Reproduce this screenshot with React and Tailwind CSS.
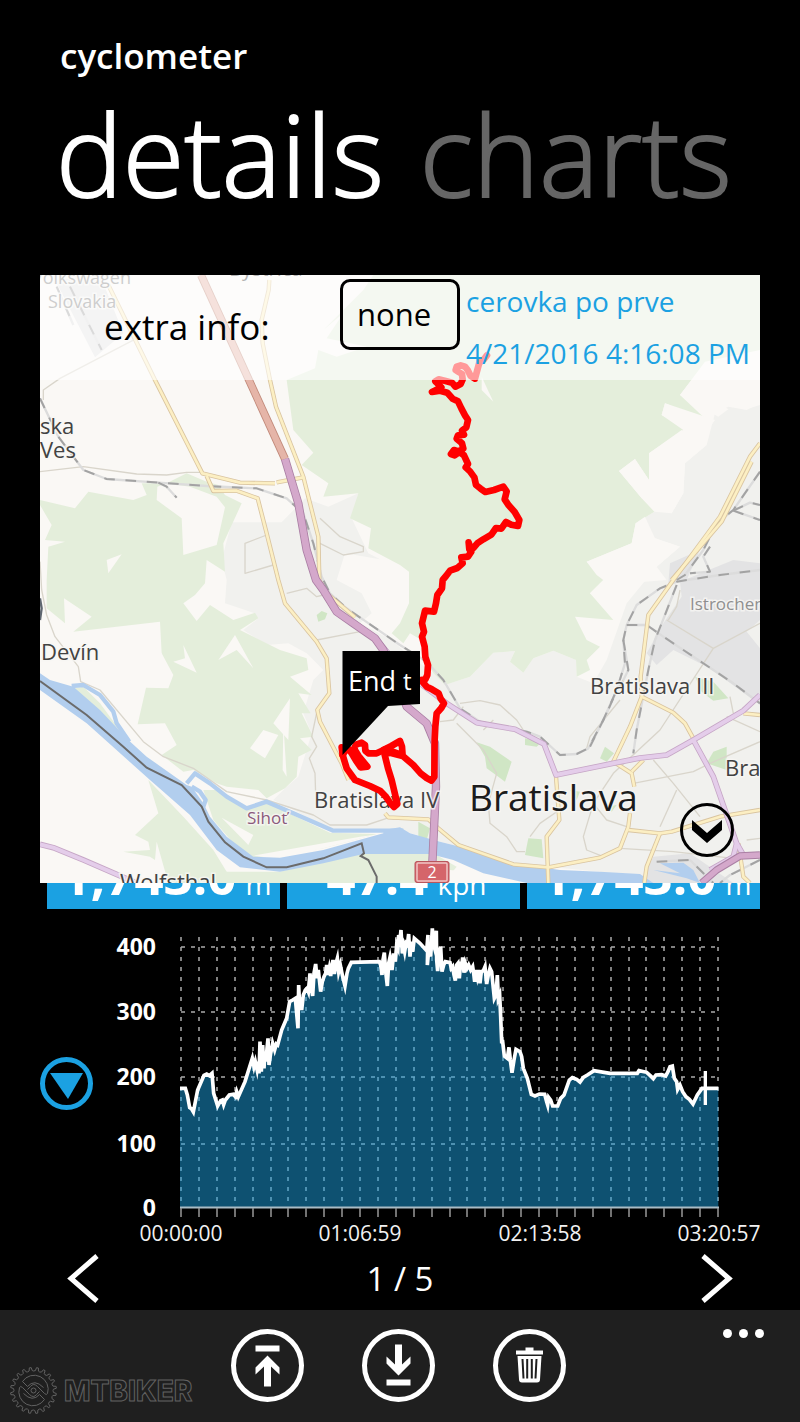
import React from "react";

const FONT = "font-['Open_Sans','Noto_Sans',sans-serif]";

/* Map geometry is drawn on a grid three times finer than the map's own units. */
const GREENS = [
  "740,330 825,295 835,240 890,260 980,230 910,215 860,205 910,130 850,180 970,60 1000,15 2160,15 2160,240 1995,275 1920,375 2000,450 1875,400 1865,435 1930,480 1827,550 1827,630 1785,567 1737,603 1810,690 1843,725 1787,760 1775,820 1640,875 1670,915 1690,930 1650,970 1720,1050 1605,1040 1640,1110 1680,1130 1640,1170 1650,1200 1610,1220 1608,1170 1540,1142 1480,1165 1450,1208 1410,1175 1425,1143 1360,1148 1290,1220 1215,1245 1180,1210 1160,1180 1160,1120 1110,1090 1090,1120 1055,1090 1080,1060 1107,1000 1107,905 1080,885 985,835 993,775 930,745 955,670 850,680 865,640 785,585 820,548 760,480",
  "0,690 105,715 145,665 280,690 320,675 305,640 380,640 440,610 500,635 535,645 555,675 605,700 550,820 555,905 500,870 495,940 465,975 430,1000 470,1053 510,1005 580,1050 645,1028 655,1045 600,1080 720,1140 800,1165 805,1200 750,1220 815,1275 775,1270 812,1330 785,1330 820,1400 780,1405 815,1440 775,1460 770,1520 735,1555 680,1585 655,1560 560,1550 530,1540 460,1500 430,1505 365,1455 410,1425 375,1360 293,1363 318,1253 385,1255 400,1215 365,1150 360,1055 100,1085 155,1040 72,985 75,1060 20,1015 20,930 25,830 75,815 15,810 35,765 0,705",
  "285,1695 355,1630 325,1530 430,1640 520,1740 560,1805 620,1839 385,1839 350,1715 345,1770 330,1760 250,1745 330,1740 325,1715",
  "550,1805 720,1805 960,1745 1080,1750 1180,1750 1250,1790 1210,1839 560,1839",
  "490,1560 540,1560 620,1618 680,1598 870,1688 1010,1692 850,1735 640,1762 580,1720 520,1650",
  "100,1255 130,1250 180,1300 250,1395 180,1330",
];
const CLEARINGS = [
  "350,690 425,745 430,855 530,825 555,712 530,680 450,650 380,640 352,650",
  "200,870 245,853 205,910", "585,1095 640,1195 590,1140 535,1170", "430,1125 470,1208 400,1175 435,1165",
  "750,1285 745,1410 700,1360", "670,1380 715,1395 675,1465 630,1435", "545,1643 640,1695 625,1725",
  "1325,320 1360,395 1325,360", "640,1757 960,1700 1000,1695 850,1735 720,1760", "1230,1800 1330,1810 1390,1839 1220,1839",
  "322,1110 318,1150 370,1215 365,1150", "730,1360 740,1520 728,1500",
];
const URBAN = [
  "575,757 725,757 795,685 865,710 955,670 935,745 985,850 1020,868 915,850 890,930 965,970 995,1030 960,1060 1055,1110 1100,1150 1180,1210 1215,1245 1290,1220 1360,1148 1425,1143 1410,1175 1450,1208 1480,1165 1540,1142 1608,1170 1610,1220 1660,1240 1700,1170 1760,1000 1850,890 1920,830 1845,805 1787,760 1843,725 1895,730 1930,670 1935,580 2000,525 2025,430 2065,410 2120,420 2160,400 2160,1839 1840,1839 1680,1805 1420,1780 1260,1730 1180,1710 1080,1680 960,1688 870,1675 760,1620 700,1590 735,1555 775,1520 800,1440 815,1390 790,1330 820,1230 850,1200 800,1150 745,1120 680,1125 610,1080 655,1045 640,1028 555,1000 560,930 545,870",
];
const SHARDS = ["2055,300 2160,255 2160,405 2118,418", "1920,375 1955,330 2065,418 2035,440", "1875,400 2025,450 1990,500 1865,435", "1827,550 1925,480 2000,525 1935,580 1930,670 1895,730 1805,685 1737,603 1785,567 1827,630", "1640,875 1775,820 1787,760 1815,740 1845,805 1920,830 1850,890 1880,930 1760,940 1700,1000 1650,970 1690,930"];
const INDUSTRY = [
  "45,30 180,15 250,190 165,262", "1920,935 2080,870 2160,880 2160,1050 2120,1085 2160,1135 2160,1305 2010,1195 1900,1140 1850,1185 1820,1150 1870,1060 1925,980",
  "1890,880 1980,840 1940,930 1885,940", "1840,1760 1950,1750 2080,1839 1800,1839",
];
const PARKS = [
  "830,1035 845,1023 862,1030 855,1048 835,1055", "1310,1417 1350,1430 1415,1475 1395,1535 1375,1520 1340,1495 1335,1460",
  "1465,1705 1505,1708 1510,1765 1455,1755", "1695,1430 1722,1450 1700,1475 1680,1465", "1965,1220 2020,1235 2065,1285 2020,1292 1985,1265",
  "2060,1430 2060,1500 2000,1480 2020,1445", "1135,1655 1170,1675 1160,1710 1135,1700", "1455,1405 1505,1415 1490,1430 1455,1425", "1590,1560 1620,1565 1610,1590", "1700,1610 1730,1605 1715,1625",
];
const HIGHWAY = "735,567 775,700 800,840 828,930 850,960 890,1025 940,1060 1005,1105 1030,1140 1045,1190 1075,1240 1100,1310 1160,1360 1185,1420 1188,1550 1177,1780";
const ARTERIES = [
  "940,1055 1010,1110 1080,1190 1140,1240 1220,1300 1310,1358 1425,1378 1512,1422 1548,1515 1720,1480 1800,1464 1880,1455 1960,1410 2110,1322 2160,1275",
  "1960,1410 2020,1520 2090,1720 2110,1755", "0,1723 40,1733 130,1770 230,1813 290,1839", "2090,1720 2080,1760 2010,1800",
];
const MAUVE = ["2160,1755 2100,1758 2030,1800 1985,1839"];
const YELLOW = [
  "205,45 345,330 487,610 600,638 705,640", "710,637 790,622", "500,618 520,663 590,662 653,685 680,790 715,930 735,1000 830,1115 860,1165 868,1270 832,1320 840,1355 905,1480 925,1530",
  "688,30 686,60 665,150 668,220 690,330 708,410 790,620 835,800 838,930 860,970 945,1042",
  "1035,1630 1045,1642 1165,1648 1195,1675 1255,1725 1420,1783 1525,1792 1680,1763 1740,1735 1765,1670 1770,1630",
  "2160,520 2130,560 2040,740 1900,930 1825,1035 1802,1220 1805,1280 1770,1370 1720,1475 1775,1510 1783,1550",
  "2135,575 2045,755 1895,930", "1805,1280 1900,1328 1935,1360 1960,1405", "1775,1505 1810,1470",
  "1548,1520 1558,1650 1520,1700 1525,1839", "1765,1680 1860,1690 1895,1685 2040,1640 2160,1620", "1860,1690 1820,1790 1813,1839",
  "2095,1720 2110,1820 2130,1839", "2110,1330 2160,1335",
];
const RAILS = [
  "0,385 55,500 130,600 200,627 355,638 500,648 650,655 740,685 790,730 820,820 845,920 870,970 920,1015 1000,1070 1080,1125 1160,1175 1210,1230 1260,1315 1320,1355 1460,1385 1500,1400 1560,1455 1610,1452 1645,1435 1690,1350 1730,1260 1755,1180 1750,1110 1760,1065 1790,1005 1860,955 1910,935 2040,915 2160,900",
  "1910,945 1865,1060 1845,1110 1825,1200 1790,1380 1780,1450", "1760,1065 1820,1065 1870,1100 1930,1140 2020,1200 2080,1240 2160,1300",
  "2160,605 2080,720 2030,760 1990,840 1935,915 1910,930", "2080,722 2130,698 2160,705", "2080,722 2160,750", "2010,830 1990,860 2010,905 1950,910", "355,638 380,650 410,683",
  "90,50 185,240", "50,50 100,165", "1650,1430 1700,1330 1735,1250", "1850,1775 1950,1770 2020,1839", "2160,1770 2070,1815 2040,1839", "1750,1110 1765,1200 1740,1250",
];
const LANES = [
  "0,605 130,590 290,612 380,615 440,607 487,607", "10,390 10,360 60,325 290,205", "0,875 5,960 20,1035 45,1100 115,1190 122,1235 180,1260 310,1415 370,1460 460,1495 560,1565 680,1590 820,1635 870,1665 980,1665 1040,1645",
  "680,795 615,820 615,910 700,885", "840,745 900,800 970,830 970,845 910,855 840,820", "740,970 800,955 830,980 850,975", "830,1110 960,1085",
  "832,1320 815,1400 830,1430 808,1465 825,1510 828,1605", "1260,1300 1320,1292 1380,1305 1430,1350 1450,1380", "1200,1355 1240,1350 1270,1310", "1250,1360 1330,1440 1370,1510 1345,1600 1350,1660 1400,1700 1430,1745 1455,1745",
  "1330,1380 1360,1350", "1880,1050 2020,1135 1860,1380 1720,1510 1660,1600 1700,1650 1760,1670", "2020,1135 2160,1060", "1840,1470 1900,1540 1980,1640", "1780,1540 1960,1505 2010,1480 2160,1415",
  "1910,1560 1860,1670", "1660,1600 1630,1700 1640,1740 1690,1760", "1740,1735 1900,1745 2080,1765", "1470,1700 1500,1660 1558,1620", "1640,1435 1650,1400 1740,1290", "2060,1340 2160,1385", "2070,1280 2080,1330", "1920,960 1910,1010 1885,1050", "2120,1710 2160,1705",
];
const TRACK = [
  "1341,256 1332,268 1318,278 1312,300 1305,326 1292,318 1283,300 1275,290 1262,286 1250,290 1247,300 1256,306 1266,312 1268,328 1262,342 1246,350 1236,338 1214,332 1196,328 1186,334 1194,342 1204,352 1184,362 1176,366 1200,362 1222,368 1238,386 1254,394 1264,415 1275,436 1284,450 1279,472 1266,482 1272,494 1254,496 1250,506 1266,520 1270,536 1256,544 1242,540 1233,552 1244,556 1258,546 1272,556 1284,582 1277,592 1290,604 1303,622 1308,645 1322,656 1336,666 1362,660 1390,650 1400,664 1394,688 1406,706 1424,726 1438,750 1434,768 1414,764 1398,756 1384,776 1368,774 1354,794 1330,808 1312,820 1300,834 1288,838 1286,817 1294,845 1284,860 1264,862 1268,880 1252,894 1230,902 1218,918 1208,930 1206,955 1192,975 1188,1000 1182,1025 1155,1022 1152,1035 1146,1060 1152,1085 1146,1100 1154,1130 1156,1160 1164,1185 1162,1215 1156,1228 1143,1230 1160,1250 1176,1258 1196,1270 1202,1286 1212,1300 1204,1314 1190,1330 1186,1370 1184,1410 1183,1520 1174,1532 1160,1524 1142,1510 1120,1485 1085,1455 1060,1446 1030,1440 1054,1428 1080,1413 1086,1430 1088,1458 1050,1448 1034,1454 1044,1495 1055,1530 1072,1602 1062,1611 1050,1598 1036,1578 1020,1562 990,1548 945,1530 920,1495 908,1455 905,1432",
  "1036,1438 1010,1450 985,1450 976,1442 975,1425 965,1418 948,1424 942,1436 956,1458 982,1490 962,1492 948,1472 935,1450 922,1432 908,1455",
];

function MapDrawing() {
  const poly = (list, fill) => list.map((p) => <polygon key={p} points={p} fill={fill} />);
  const lines = (list, stroke, width, extra) =>
    list.map((p) => <polyline key={p} points={p} stroke={stroke} strokeWidth={width} fill="none" strokeLinejoin="round" {...extra} />);
  const halo = { stroke: "#f8f7f4", strokeWidth: 3, paintOrder: "stroke", strokeOpacity: 0.8 };
  return (
    <svg viewBox="40 275 720 608" className="block w-full" role="img" aria-label="Map of the ride around Bratislava">
      <rect x="40" y="275" width="720" height="608" fill="#faf8f5" />
      <g transform="translate(40 270) scale(.33333)">
        {poly(URBAN, "#f1f1ee")}
        {poly(GREENS, "#e4eedb")}
        {poly(CLEARINGS, "#faf8f5")}
        {poly(SHARDS, "#faf8f5")}
        {poly(INDUSTRY, "#e3e3e4")}
        {poly(PARKS, "#d0e6c5")}
        {lines(LANES, "#d9d5cb", 4)}
        <path
          fill="#b2ceee"
          d="M0 1210 30 1230 100 1250 180 1320 265 1410 320 1460 440 1545 455 1550 490 1600 510 1640 560 1700 640 1760 720 1763 850 1740 1030 1690 1030 1680 1080 1672 1110 1690 1200 1715 1260 1730 1420 1780 1560 1800 1680 1805 1800 1812 1840 1839 1460 1839 1330 1810 1240 1770 1170 1752 970 1752 850 1780 720 1805 600 1792 530 1740 450 1635 330 1530 140 1360 0 1260Z"
        />
        <path d="M1860 1780 1930 1778 1960 1800 1980 1839 1940 1825 1840 1800 1920 1810Z" fill="#b2ceee" />
        {lines(
          ["95,1248 130,1245 180,1275 220,1325 230,1360 268,1415", "440,1540 465,1510 510,1540 560,1580 620,1615 680,1595 760,1630 880,1682 1090,1682", "455,1550 480,1565 497,1590 490,1610"],
          "#b2ceee",
          13
        )}
        <polyline points="0,1233 140,1335 250,1430 320,1493 425,1545 485,1610 505,1655 555,1717 610,1760 680,1792 740,1792 850,1765 965,1720 972,1750 962,1758 985,1770 1010,1820 1010,1839" fill="none" stroke="#6b6b6b" strokeWidth="6" />
        <polyline points="0,985 5,1015 0,1050" fill="none" stroke="#5f6670" strokeWidth="7" />
        {lines(RAILS, "#dcdcdc", 7)}
        {lines(RAILS, "#a3a3a3", 6, { strokeDasharray: "32 32" })}
        {lines(YELLOW, "#d9c4a0", 13)}
        {lines(YELLOW, "#fcefc3", 8)}
        {lines(ARTERIES, "#c6a6c6", 17)}
        {lines(ARTERIES, "#e4cdea", 12)}
        <polyline points="483,15 735,567" stroke="#c08878" strokeWidth="24" />
        <polyline points="483,15 735,567" stroke="#e5b5a8" strokeWidth="19" />
        {lines([HIGHWAY], "#aa7fa4", 25)}
        {lines([HIGHWAY], "#d4a8cb", 20)}
        {lines(MAUVE, "#aa7fa4", 22)}
        {lines(MAUVE, "#d4a8cb", 16)}
      </g>
      <g className={FONT} fontSize="22" fill="#424242" {...halo}>
        <text x="32" y="284" fontSize="18" fill="#838383">Volkswagen</text>
        <text x="48" y="308" fontSize="18" fill="#838383">Slovakia</text>
        <text x="229" y="276" fontSize="20">Bystrica</text>
        <text x="40" y="434">ska</text>
        <text x="40" y="458">Ves</text>
        <text x="41" y="660">Devín</text>
        <text x="590" y="694">Bratislava III</text>
        <text x="314" y="808">Bratislava IV</text>
        <text x="725" y="776">Bra</text>
        <text x="120" y="890">Wolfsthal</text>
        <text x="247" y="824" fontSize="17" fill="#8b5a7c">Sihoť</text>
        <text x="690" y="610" fontSize="17" fill="#8f8f8f">Istrochem</text>
        <text x="469" y="811" fontSize="37" fill="#1c1c1c">Bratislava</text>
      </g>
      <rect x="415" y="861.500" width="34" height="21" rx="2" fill="#d5656a" stroke="#b9555c" />
      <rect x="417" y="863" width="30" height="18" rx="1" fill="none" stroke="#f0c5c5" strokeWidth="1.5" />
      <text x="432" y="878" textAnchor="middle" fontSize="16" fill="#fff" className={FONT}>2</text>
      <g transform="translate(40 270) scale(.33333)">{lines(TRACK, "#ff0000", 20, { strokeLinecap: "round" })}</g>
      <path d="M342.500 651H420V704L388 706 342.500 755Z" fill="#000" />
      <g className={FONT} fill="#fff">
        <text x="348" y="691" fontSize="27">End</text>
        <text x="403" y="690" fontSize="24">t</text>
      </g>
    </svg>
  );
}

const SERIES =
  "540,535 556,535 562,555 569,593 574,596 580,606 593,540 612,496 620,492 628,497 636,490 641,550 653,588 662,572 667,570 671,584 676,570 688,555 700,553 706,560 710,545 715,560 735,515 745,483 757,445 762,470 766,455 771,478 774,455 777,490 780,395 784,485 788,405 792,475 795,425 798,455 801,415 804,385 807,465 812,430 818,400 824,420 829,402 833,405 845,360 860,325 869,275 878,270 886,265 890,310 894,355 896,225 899,290 902,262 905,300 910,255 916,240 921,235 925,245 930,190 934,235 938,258 942,190 947,162 951,205 955,180 962,245 967,215 972,200 977,190 980,165 984,195 988,175 992,198 996,165 999,150 1003,192 1008,160 1012,145 1016,185 1021,165 1027,195 1035,228 1041,190 1045,175 1054,157 1138,155 1142,165 1146,195 1149,150 1153,128 1157,185 1162,228 1166,160 1170,142 1176,180 1181,130 1186,155 1190,105 1194,115 1196,75 1200,90 1203,60 1207,130 1211,110 1214,125 1218,100 1222,105 1226,72 1230,140 1234,95 1238,125 1243,85 1260,100 1280,122 1284,75 1282,165 1288,100 1292,140 1297,55 1300,100 1304,115 1309,62 1310,150 1313,183 1317,130 1322,110 1326,185 1331,165 1336,155 1350,158 1354,175 1358,170 1362,195 1366,212 1370,165 1374,160 1378,205 1382,155 1385,170 1388,142 1392,188 1396,160 1401,175 1406,165 1412,180 1418,170 1421,190 1424,215 1428,180 1432,200 1436,180 1440,220 1444,185 1450,182 1455,170 1460,222 1465,195 1470,175 1475,185 1480,235 1483,265 1488,255 1492,195 1495,265 1499,255 1502,320 1505,395 1508,395 1513,438 1522,445 1527,412 1531,450 1536,488 1542,450 1548,418 1560,425 1565,440 1570,475 1582,505 1594,553 1605,558 1618,552 1634,553 1640,575 1643,585 1646,562 1652,570 1658,588 1673,588 1682,565 1692,555 1708,510 1717,503 1730,508 1740,516 1750,502 1762,495 1782,482 1830,490 1912,490 1917,482 1940,487 1950,496 1960,506 1968,495 1985,494 1997,498 2004,485 2010,470 2017,468 2023,505 2030,515 2033,538 2040,525 2048,545 2058,560 2068,568 2079,582 2092,555 2106,535 2155,535";

function AltitudeChart() {
  const columns = Array.from({ length: 31 }, (_, i) => Math.round(181 + i * 17.9));
  const levels = [[947, "400"], [1012, "300"], [1077, "200"], [1144, "100"], [1208, "0"]];
  return (
    <svg viewBox="100 925 660 316" className={"block min-w-0 flex-1 overflow-visible " + FONT} role="img" aria-label="Altitude over time">
      <g stroke="#aaaaaa" strokeWidth="1.5">
        {columns.map((x) => <line key={x} x1={x} x2={x} y1="937" y2="1207" strokeDasharray="4 6" />)}
        {levels.slice(0, 4).map(([y]) => <line key={y} x1="181" x2="718" y1={y} y2={y} strokeDasharray="4 6" />)}
      </g>
      <g transform="translate(0 910) scale(.33333)">
        <polygon points={"540,891 " + SERIES + " 2155,891"} fill="#1ba1e2" fillOpacity=".5" />
        <polyline points={SERIES} fill="none" stroke="#fff" strokeWidth="11" strokeLinejoin="miter" strokeMiterlimit="6" />
        <path d="M2116 483V585" stroke="#fff" strokeWidth="10" />
      </g>
      <path d="M180 1207.500H719" stroke="#a9bcc6" strokeWidth="2" />
      {columns.map((x) => <path key={x} d={"M" + x + " 1208v9"} stroke="#999" strokeWidth="1.5" />)}
      <g fill="#fff" fontSize="23" fontWeight="700" textAnchor="end">
        {levels.map(([y, label]) => <text key={label} x="156" y={y + 8}>{label}</text>)}
      </g>
      <g fill="#f2f2f2" fontSize="21" textAnchor="middle">
        <text x="181" y="1241">00:00:00</text>
        <text x="360" y="1241">01:06:59</text>
        <text x="540" y="1241">02:13:58</text>
        <text x="719" y="1241">03:20:57</text>
      </g>
    </svg>
  );
}

function Tile({ value, unit }) {
  return (
    <div className="flex h-[26px] items-end justify-center overflow-hidden bg-[#1ba1e2]">
      <p className="flex items-baseline gap-[9px] pl-[6px] leading-[50px]">
        <span className="text-[51px] font-bold">{value}</span>
        <span className="text-[28px]">{unit}</span>
      </p>
    </div>
  );
}

function RoundButton({ label, children }) {
  return (
    <button type="button" aria-label={label} className="size-[73px] rounded-full border-[5px] border-white">
      <svg viewBox="-31.500 -31.500 63 63" className="size-full" fill="#fff">{children}</svg>
    </button>
  );
}

function gearPath() {
  const pts = [];
  const teeth = 20;
  for (let i = 0; i < teeth; i++) {
    [[0, 19.5], [0.3, 20], [0.42, 23], [0.68, 23], [0.8, 20]].forEach(([o, r]) => {
      const a = ((i + o) / teeth) * Math.PI * 2;
      pts.push((r * Math.cos(a)).toFixed(2) + " " + (r * Math.sin(a)).toFixed(2));
    });
  }
  return "M" + pts.join("L") + "Z";
}

function Watermark() {
  return (
    <svg viewBox="8 1362 190 56" className="w-[190px]" fill="none" stroke="#626262" strokeWidth="1" role="img" aria-label="MTBIKER">
      <g transform="translate(33.500 1390.500)">
        <path d={gearPath()} />
        <path d="M-11 -9A14 14 0 0 1 14 3Q13 5 11 3L4 -4Q0 -8 -3 -4L-6 -1" />
        <path d="M11 9A14 14 0 0 1 -14 -3Q-13 -5 -11 -3L-4 4Q0 8 3 4L6 1" />
        <path d="M-11 -9 -6 -4Q1 -12 10 -3M11 9 6 4Q-1 12 -10 3" />
        <circle r="2.500" />
      </g>
      <text x="64" y="1401" fontSize="28" fontWeight="800" className="font-['Inter',sans-serif]">MTBIKER</text>
    </svg>
  );
}

export default function App() {
  return (
    <div className={"flex min-h-screen flex-col bg-black text-white " + FONT}>
      <header className="overflow-hidden px-[60px] pt-8 pb-[51px]">
        <h1 className="text-[35px] leading-[48px] font-semibold">cyclometer</h1>
        <nav className="mt-1 -ml-1 flex gap-9 text-[112px] leading-[140px] font-light [-webkit-text-stroke:2px_currentColor]">
          <button type="button">details</button>
          <button type="button" className="text-[#666]">charts</button>
        </nav>
      </header>

      <main className="flex flex-1 flex-col">
        <section className="relative mx-10 overflow-hidden">
          <MapDrawing />
          <div className="absolute inset-x-0 top-0 flex h-[105px] bg-white/60 text-black">
            <label htmlFor="extra" className="w-[300px] shrink-0 pl-16 text-[35px] leading-[104px]">extra info:</label>
            <select id="extra" className="mt-1 h-[71px] w-[120px] shrink-0 appearance-none rounded-[10px] border-[3px] border-black px-[14px] text-[31px]">
              <option>none</option>
            </select>
            <div className="flex-1 pl-[6px] text-[28px] leading-[52px] whitespace-nowrap text-[#1ba1e2]">
              <p>cerovka po prve</p>
              <p>4/21/2016 4:16:08 PM</p>
            </div>
          </div>
          <button type="button" aria-label="Collapse map" className="absolute right-[26px] bottom-[26px] size-[54px] rounded-full border-[3px] border-black">
            <svg viewBox="0 0 48 48" className="size-full"><path d="M9 14 24 27 39 14V24L24 37 9 24Z" /></svg>
          </button>
        </section>

        <section className="mr-10 ml-[47px] grid grid-cols-3 gap-[7px]">
          <Tile value="1,743.0" unit="m" />
          <Tile value="47.4" unit="kph" />
          <Tile value="1,743.0" unit="m" />
        </section>

        <section className="mx-10 mt-4 flex items-center gap-[7px]">
          <button type="button" aria-label="Choose chart" className="size-[53px] shrink-0 rounded-full border-[5px] border-[#1ba1e2]">
            <svg viewBox="0 0 43 43" className="size-full"><path d="M5 11H38L23 37Z" fill="#1ba1e2" /></svg>
          </button>
          <AltitudeChart />
        </section>

        <section className="flex items-center justify-between px-[66px] pt-[13px] pb-[7px]">
          <button type="button" aria-label="Previous">
            <svg viewBox="0 0 34 49" className="h-[49px] w-[34px]" fill="none" stroke="#fff" strokeWidth="5"><path d="M31 2 5 24.500 31 47" /></svg>
          </button>
          <p className="text-[33px] leading-[49px]">1 / 5</p>
          <button type="button" aria-label="Next">
            <svg viewBox="0 0 34 49" className="h-[49px] w-[34px]" fill="none" stroke="#fff" strokeWidth="5"><path d="M3 2 29 24.500 3 47" /></svg>
          </button>
        </section>
      </main>

      <footer className="grid h-28 grid-cols-[1fr_auto_1fr] bg-[#1f1f1f]">
        <div className="self-end pb-1 pl-2"><Watermark /></div>
        <div className="flex gap-[58px] pt-[19px] pr-1">
          <RoundButton label="Upload"><path d="M-12 -20H12V-14H-12ZM0 -10 12 2V9L3.500 1V21H-3.500V1L-12 9V2Z" /></RoundButton>
          <RoundButton label="Download"><path d="M-12 20H12V14H-12ZM0 10 12 -2V-9L3.500 -1V-21H-3.500V-1L-12 -9V-2Z" /></RoundButton>
          <RoundButton label="Delete">
            <path d="M-4 -18H4V-15H13.500V-11H-13.500V-15H-4ZM-12 -9.500H12L10.500 14Q10.500 17 7.500 17H-7.500Q-10.500 17 -10.500 14Z" />
            <path d="M-7 -6.500 -6 13M-2.300 -6.500V13M2.300 -6.500V13M7 -6.500 6 13" stroke="#1f1f1f" strokeWidth="2" />
          </RoundButton>
        </div>
        <button type="button" aria-label="More" className="flex items-start justify-end gap-[7px] pt-[19px] pr-9">
          <span className="size-[9px] rounded-full bg-white" />
          <span className="size-[9px] rounded-full bg-white" />
          <span className="size-[9px] rounded-full bg-white" />
        </button>
      </footer>
    </div>
  );
}
